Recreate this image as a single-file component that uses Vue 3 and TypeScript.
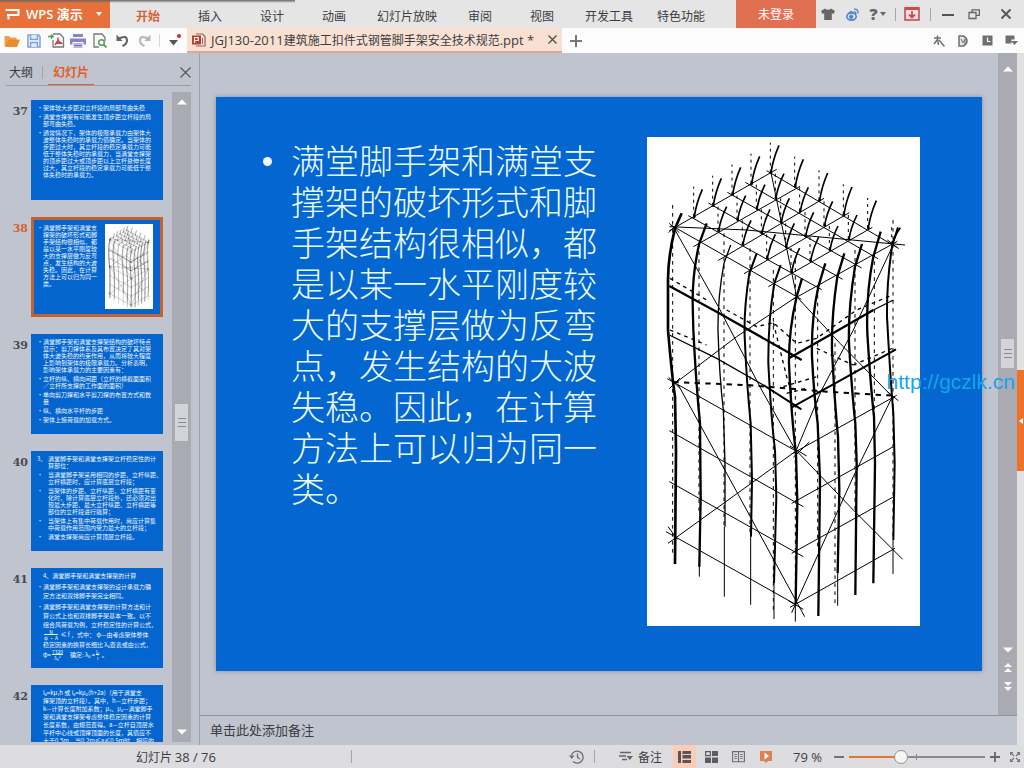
<script setup lang="ts">
import { ref } from 'vue'

interface Fraction { n: string; d: string }
type Piece = string | Fraction
interface Para { mark: string; lines: Piece[][] }
interface Slide { no: number; kind: string; paras: Para[]; picture?: boolean }

const para = (mark: string, ...lines: (string | Piece[])[]): Para => ({
  mark,
  lines: lines.map((l) => (typeof l === 'string' ? [l] : l)),
})

const menus: string[] = ['开始', '插入', '设计', '动画', '幻灯片放映', '审阅', '视图', '开发工具', '特色功能']
const activeMenu = ref('开始')
const activeSlide = ref(38)
const zoomLevel = ref(37)
const notes = ref('')

const bodyLines: string[] = [
  '满堂脚手架和满堂支',
  '撑架的破坏形式和脚',
  '手架结构很相似，都',
  '是以某一水平刚度较',
  '大的支撑层做为反弯',
  '点，发生结构的大波',
  '失稳。因此，在计算',
  '方法上可以归为同一',
  '类。',
]

const slides: Slide[] = [
  {
    no: 37, kind: 'plain', paras: [
      para('•', '架体较大步距对立杆段的局部弯曲失稳'),
      para('•', '满堂支撑架有可能发生顶步距立杆段的局', '部弯曲失稳。'),
      para('•', '通常情况下，架体的极限承载力由架体大', '波整体失稳时的承载力值确定。当架体的', '步距过大时，其立杆段的稳定承载力可能', '低于整体失稳时的承载力，当满堂支撑架', '的顶步距过大或顶步距以上立杆悬伸长度', '过大，其立杆段的稳定承载力可能低于整', '体失稳时的承载力。'),
    ],
  },
  { no: 38, kind: 'pictured', picture: true, paras: [para('•', ...bodyLines)] },
  {
    no: 39, kind: 'plain', paras: [
      para('•', '满堂脚手架和满堂支撑架结构的破坏特点', '显示：剪刀撑体系及其布置决定了其对架', '体大波失稳的约束作用，从而将较大程度', '上影响到架体的极限承载力。分析表明，', '影响架体承载力的主要因素有：'),
      para('•', '立杆的纵、横向间距（立杆的横截面面积', '／立杆所支撑的工作面的面积）'),
      para('•', '单向剪刀撑和水平剪刀撑的布置方式和数', '量'),
      para('•', '纵、横向水平杆的步距'),
      para('•', '架体上施荷载的加载方式。'),
    ],
  },
  {
    no: 40, kind: 'wide', paras: [
      para('3、', '满堂脚手架和满堂支撑架立杆稳定性的计', '算部位：'),
      para('•', '当满堂脚手架采用相同的步距、立杆纵距、', '立杆横距时，应计算底层立杆段；'),
      para('•', '当架体的步距、立杆纵距、立杆横距有变', '化时，除计算底层立杆段外，还必须对出', '现最大步距、最大立杆纵距、立杆横距等', '部位的立杆段进行验算；'),
      para('•', '当架体上有集中荷载作用时，尚应计算集', '中荷载作用范围内受力最大的立杆段；'),
      para('•', '满堂支撑架尚应计算顶层立杆段。'),
    ],
  },
  {
    no: 41, kind: 'loose', paras: [
      para('', '4、满堂脚手架和满堂支撑架的计算'),
      para('•', '满堂脚手架和满堂支撑架的设计承载力确', '定方法和双排脚手架完全相同。'),
      para('•', '满堂脚手架和满堂支撑架的计算方法和计', '算公式上也和双排脚手架基本一致。以不',
        '组合风荷载为例，立杆稳定性的计算公式，',
        [{ n: 'N', d: 'φ · A' }, ' ≤ f ，式中： φ—由考虑架体整体'],
        '稳定因素的换算长细比 λ₀查表或由公式，',
        ['φ=', { n: '7320', d: 'λ₀²' }, '　确定: λ₀ =', { n: 'l₀', d: 'i' }, ' 。']),
    ],
  },
  {
    no: 42, kind: 'dense', paras: [
      para('', 'l₀=kμ₁h 或 l₀=kμ₂(h+2a)（用于满堂支', '撑架顶的立杆段）。其中，h—立杆步距；', 'k—计算长度附加系数；μ₁、μ₂—满堂脚手', '架和满堂支撑架考虑整体稳定因素的计算', '长度系数，由规范查得。a—立杆自顶层水', '平杆中心线或顶撑顶面的长度，其值应不', '大于0.5m，当0.2m≤a≤0.5m时，相应的'),
    ],
  },
]

/* Roof grid of the scaffold: each node carries a dashed axis and a leaning stub. */
const stubs: { x: number; y: number; h: number }[] = []
for (let i = 0; i <= 5; i++) {
  for (let j = 0; j <= 5; j++) {
    if (i === 0 || j === 5) continue
    stubs.push({
      x: Math.round(105 + i * 57.6 + j * 73),
      y: Math.round(293 - i * 33 + j * 41.6),
      h: i === 5 || j === 0 ? 82 : 72,
    })
  }
}
stubs.push({ x: 757, y: 343, h: 50 })

const posts: { d: string; w: number }[] = [
  { d: 'M125 250 L105 295 Q84 380 84 450 L84 600 Q96 740 105 800 L108 960 L105 1302', w: 8 },
  { d: 'M200 280 L178 340 Q157 430 158 520 L160 600 Q168 760 180 880 L182 1100 L178 1310', w: 7 },
  { d: 'M272 345 L252 400 Q233 500 234 600 Q238 740 250 840 L255 1000 L255 1190', w: 4 },
  { d: 'M350 370 L328 430 Q311 540 314 620 Q320 760 332 880 L336 1050 L333 1220', w: 6 },
  { d: 'M422 405 L403 460 Q384 570 385 700 Q393 860 405 960 L409 1100 L402 1360', w: 6 },
  { d: 'M486 445 L470 500 Q446 600 447 700 Q454 860 468 970 L472 1120 L467 1420', w: 7 },
  { d: 'M556 400 L535 470 Q513 570 516 680 Q522 800 533 880 L540 1050 L535 1458', w: 7 },
  { d: 'M613 370 L592 440 Q574 560 576 660 Q584 820 594 920 L598 1080 L593 1330', w: 7 },
  { d: 'M666 342 L645 410 Q624 540 627 640 Q636 790 646 880 L650 1000 L646 1395', w: 7 },
  { d: 'M722 305 L700 380 Q678 490 682 610 Q692 770 702 860 L705 1000 L700 1360', w: 7 },
  { d: 'M774 292 L757 345 Q740 450 741 560 Q750 730 760 850 L764 1000 L760 1230', w: 6 },
]
const tails = 'M178 1300 V1340 M253 1190 V1400 M332 1220 V1424 M402 1360 V1467 M466 1420 V1475 M593 1330 V1427 M759 1230 V1332'
const axes: number[][] = [
  [98, 225, 1270], [177, 340, 1150], [252, 310, 1190], [330, 355, 1210], [400, 420, 1440], [466, 390, 1400],
  [533, 470, 1260], [585, 640, 1420], [645, 360, 1150], [703, 370, 880], [759, 270, 1230],
]
const roof = [
  'M88 302 L410 118', 'M380 122 L770 352', 'M92 285 L484 508', 'M455 510 L772 334',
  'M145 257 L545 479', 'M205 219 L608 448', 'M262 187 L665 414', 'M316 157 L714 386',
  'M160 350 L480 169', 'M235 391 L552 205', 'M312 431 L628 248', 'M385 470 L697 292',
  'M88 290 L320 300 L795 345', 'M393 128 L440 355 L470 500',
].join(' ')
const braces = [
  'M105 300 L235 530 L365 780 L468 963', 'M470 500 L290 620 L105 760', 'M115 765 L290 1085 L494 1460',
  'M468 963 L105 1225 L84 1240', 'M757 350 L640 600 L545 780 L468 963', 'M470 500 L600 640 L757 800',
  'M757 800 L640 1040 L455 1448', 'M470 963 L640 1140 L788 1288',
  'M82 746 L468 963', 'M88 902 L490 1130', 'M88 1055 L490 1280', 'M78 1205 L470 1425',
  'M455 972 L770 796', 'M455 1120 L760 950', 'M455 1270 L765 1098', 'M450 1432 L765 1255',
].join(' ')
</script>

<template>
  <div class="app">
    <svg class="defs" width="0" height="0" aria-hidden="true">
      <symbol id="scaffold" viewBox="21 21 819 1467" preserveAspectRatio="none">
        <rect x="21" y="21" width="819" height="1467" fill="#fff" />
        <g fill="none" stroke="#000">
          <path v-for="a in axes" :key="a[0]" :d="`M${a[0]} ${a[1]} V${a[2]}`" stroke-width="3" stroke-dasharray="11 13" />
          <g v-for="(s, i) in stubs" :key="i">
            <path :d="`M${s.x - 2} ${s.y} v${-s.h - 8}`" stroke-width="3" stroke-dasharray="9 12" />
            <path :d="`M${s.x} ${s.y} q6 ${-s.h / 2} 24 ${-s.h}`" stroke-width="5" />
            <circle :cx="s.x" :cy="s.y" r="4" fill="#000" stroke="none" />
          </g>
          <path :d="roof" stroke-width="3" />
          <path :d="braces" stroke-width="3" />
          <path v-for="(p, i) in posts" :key="i" :d="p.d" :stroke-width="p.w" />
          <path :d="tails" stroke-width="3" />
          <path d="M88 468 L235 548 L485 690 M448 684 L575 612 L700 540" stroke-width="7" />
          <path d="M700 540 L760 510 M88 615 L230 685 L370 765" stroke-width="4" />
          <path d="M370 765 L484 838 M455 832 L600 752 L768 658" stroke-width="6" />
          <path d="M100 756 L330 766 L560 785 L757 797" stroke-width="6" stroke-dasharray="16 16" />
          <path d="M90 445 L200 510 M260 540 L350 590 L400 578 L470 640 L530 625 L650 540 L757 495 M90 600 L200 645 M400 578 L440 740 L455 790 M530 655 L640 705 M640 705 L757 655 M430 770 L530 740 M440 790 L500 775" stroke-width="4" stroke-dasharray="11 12" />
          <path d="M88 280 L118 308 M86 308 L116 278 M86 742 L120 775 M88 776 L120 744 M450 948 L500 978 M460 982 L508 936 M84 1190 L112 1228 M742 330 L776 356 M445 1412 L490 1438 M742 785 L775 812" stroke-width="3" />
        </g>
      </symbol>
    </svg>

    <header class="titlebar">
      <div class="edge-shadow"></div>
      <button class="brand" type="button">
        <svg width="16" height="14" viewBox="0 0 16 14"><path d="M0.500 3H13.500V8H3.500V12.500M2 8H9" fill="none" stroke="#fff" stroke-width="2" /></svg>
        <span>WPS 演示</span>
        <svg class="brand-arrow" width="6" height="4" viewBox="0 0 6 4"><path d="M0 0h6L3 4z" fill="#fff" /></svg>
      </button>
      <nav class="menus">
        <button v-for="m in menus" :key="m" type="button" :class="{ on: m === activeMenu }" @click="activeMenu = m">{{ m }}</button>
      </nav>
      <button class="login" type="button">未登录</button>
      <div class="window-tools">
        <button type="button" aria-label="皮肤"><svg width="14" height="12" viewBox="0 0 14 12"><path d="M4 0.500 Q7 3 10 0.500 L14 3 L12.500 6 L10.800 5.200 V12 H3.200 V5.200 L1.500 6 L0 3z" fill="#666" /></svg></button>
        <button type="button" aria-label="微博"><svg width="13" height="13" viewBox="0 0 13 13" fill="none" stroke="#4d83cf"><ellipse cx="5.500" cy="8.500" rx="4.700" ry="3.600" stroke-width="1.600" /><circle cx="5.200" cy="8.800" r="1.700" fill="#4d83cf" /><path d="M3 5 Q5 3 6.500 4.500M7.500 4 Q10 3.500 9.800 6M8 1.200 Q12.500 0.800 12 5.500" stroke-width="1.400" /></svg></button>
        <button class="help" type="button" aria-label="帮助"><b>?</b><svg width="6" height="4" viewBox="0 0 6 4"><path d="M0 0h6L3 4z" fill="#666" /></svg></button>
        <i class="sep"></i>
        <button type="button" aria-label="下载"><svg width="16" height="14" viewBox="0 0 16 14" fill="none" stroke="#d8454f"><rect x="1" y="1" width="14" height="12" stroke-width="1.600" /><path d="M1 1.500h14" stroke-width="3" /><path d="M8 4v6M5 7.500l3 3 3-3" stroke-width="1.800" /></svg></button>
        <i class="sep far"></i>
        <button type="button" aria-label="最小化"><svg width="12" height="12" viewBox="0 0 12 12"><path d="M0 7h12" stroke="#555" stroke-width="2" /></svg></button>
        <button class="restore" type="button" aria-label="还原"><svg width="12" height="12" viewBox="0 0 12 12" fill="none" stroke="#666" stroke-width="1.300"><path d="M1 4.500h7v6H1zM4 4.500V1.800h7.300v5.500H8" /></svg></button>
        <button class="shut" type="button" aria-label="关闭"><svg width="12" height="12" viewBox="0 0 12 12"><path d="M1.500 1.500l9 9M10.500 1.500l-9 9" stroke="#555" stroke-width="1.800" /></svg></button>
      </div>
    </header>

    <div class="toolbar">
      <div class="quick">
        <button type="button" aria-label="打开"><svg width="16" height="14" viewBox="0 0 16 14"><path d="M0.500 12V2h4.500l1.500 1.500h6V6H5L2 12z" fill="#f0a04b" /><path d="M4.500 5.500H16L13 13H1z" fill="#ea8b2d" /></svg></button>
        <button type="button" aria-label="保存"><svg width="14" height="14" viewBox="0 0 14 14" fill="none" stroke="#7fa0d8" stroke-width="1.500"><path d="M1 1h10.500L13 2.500V13H1z" /><path d="M3.500 1v4.500h7V1M3.500 13V8.500h7V13" fill="#dfe8f7" /></svg></button>
        <button type="button" aria-label="输出为PDF"><svg width="17" height="15" viewBox="0 0 17 15" fill="none"><path d="M5 1h7l3.500 3.500V14H5V7" stroke="#777" stroke-width="1.300" /><path d="M0 3.500h5M3 1.500l2 2-2 2" stroke="#4fa24f" stroke-width="1.600" /><path d="M10 4.500v3L7 12M10 7.500q2 3 4.500 3M8 10.500l5-1" stroke="#cf3f3f" stroke-width="1.500" /></svg></button>
        <button type="button" aria-label="打印"><svg width="16" height="14" viewBox="0 0 16 14"><path d="M3 0h10v3H3z" fill="#8884c4" /><path d="M0 4.500h16v6h-2.500V8h-11v2.500H0z" fill="#8884c4" /><path d="M3.500 9h9v5h-9z" fill="#b9b6e2" /><path d="M4 11.500h8" stroke="#7b76bb" /></svg></button>
        <button type="button" aria-label="打印预览"><svg width="14" height="15" viewBox="0 0 14 15" fill="none"><path d="M12 8V4.500L9 1H1v13h5" stroke="#777" stroke-width="1.300" /><circle cx="8.500" cy="9.500" r="2.800" stroke="#4fa24f" stroke-width="1.500" /><path d="M10.500 11.500l3 3" stroke="#4fa24f" stroke-width="1.800" /></svg></button>
        <button type="button" aria-label="撤销"><svg width="13" height="13" viewBox="0 0 13 13"><path d="M2.500 4.500Q11 0.500 11 6.500Q11 10 6.500 12" fill="none" stroke="#5f6266" stroke-width="2" /><path d="M0.500 0.500v6.500h6z" fill="#5f6266" /></svg></button>
        <button type="button" aria-label="恢复"><svg width="13" height="13" viewBox="0 0 13 13"><path d="M10.500 4.500Q2 0.500 2 6.500Q2 10 6.500 12" fill="none" stroke="#b3b6b9" stroke-width="2" /><path d="M12.500 0.500v6.500h-6z" fill="#b3b6b9" /></svg></button>
      </div>
      <i class="sep"></i>
      <button class="more" type="button" aria-label="自定义快速访问"><svg width="14" height="14" viewBox="0 0 14 14"><path d="M1 6h9l-4.500 5.500z" fill="#555" /><circle cx="11" cy="2" r="2" fill="#cf2b2b" /></svg></button>
      <div class="doc-tab">
        <svg width="14" height="14" viewBox="0 0 14 14" fill="none"><path d="M4 1h6.500L13 3.500V13H4" stroke="#7d6a64" stroke-width="1.200" /><rect x="0" y="2.500" width="9" height="9" fill="#bf3a2b" /><path d="M2.500 10V4.500h3.700v3H2.500" stroke="#fff" stroke-width="1.200" /><path d="M10.500 5v6" stroke="#c8574b" /></svg>
        <span class="doc-name"><span class="latin">JGJ130-2011</span>建筑施工扣件式钢管脚手架安全技术规范<span class="latin">.ppt *</span></span>
        <button type="button" aria-label="关闭文档"><svg width="9" height="9" viewBox="0 0 9 9"><path d="M0.500 0.500l8 8M8.500 0.500l-8 8" stroke="#444" stroke-width="1.100" /></svg></button>
      </div>
      <button class="add" type="button" aria-label="新建"><svg width="12" height="12" viewBox="0 0 12 12"><path d="M0 6h12M6 0v12" stroke="#777" stroke-width="2" /></svg></button>
      <div class="side-tools">
        <button type="button" aria-label="工具"><svg width="12" height="12" viewBox="0 0 12 12" fill="none" stroke="#6f6f73" stroke-width="1.500"><path d="M1 3h7M4.500 0.500v4L1 9M4.500 4l1 6M6 5l5.500 6.500" /></svg></button>
        <button type="button" aria-label="文档"><svg width="10" height="12" viewBox="0 0 10 12"><path d="M1 1h4.500Q9 3 9 6t-3.500 5H1z" fill="#e6e6ea" stroke="#6f6f73" stroke-width="1.500" /><path d="M3 4l2 4 2-4v5" fill="none" stroke="#6f6f73" /></svg></button>
        <button type="button" aria-label="历史"><svg width="11" height="11" viewBox="0 0 11 11"><rect x="0.500" y="0.500" width="10" height="10" fill="#6f6f73" /><path d="M5.500 2.500v4H8.500" fill="none" stroke="#fff" stroke-width="1.200" /></svg></button>
        <button type="button" aria-label="菜单"><svg width="13" height="11" viewBox="0 0 13 11"><path d="M0.500 0.500h9v4h-3v4h-6z" fill="#6f6f73" /><path d="M6 6h7l-3.500 4z" fill="#6f6f73" /></svg></button>
      </div>
    </div>

    <main class="work">
      <aside class="outline">
        <div class="outline-tabs">
          <button type="button">大纲</button>
          <i class="sep"></i>
          <button class="on" type="button">幻灯片</button>
          <button class="close" type="button" aria-label="关闭窗格"><svg width="11" height="11" viewBox="0 0 11 11"><path d="M0.500 0.500l10 10M10.500 0.500l-10 10" stroke="#555" stroke-width="1.100" /></svg></button>
        </div>
        <div class="outline-body">
          <ol class="slides">
            <li v-for="s in slides" :key="s.no" :class="{ current: s.no === activeSlide }" @click="activeSlide = s.no">
              <span class="no">{{ s.no }}</span>
              <div class="mini" :class="s.kind">
                <div class="mini-text">
                  <div v-for="(p, i) in s.paras" :key="i" class="mini-para">
                    <span class="mark">{{ p.mark }}</span>
                    <div>
                      <div v-for="(l, k) in p.lines" :key="k" class="mini-line">
                        <template v-for="(x, q) in l" :key="q">
                          <span v-if="typeof x === 'string'">{{ x }}</span>
                          <span v-else class="frac"><span>{{ x.n }}</span><span>{{ x.d }}</span></span>
                        </template>
                      </div>
                    </div>
                  </div>
                </div>
                <svg v-if="s.picture" class="mini-pic"><use href="#scaffold" width="100%" height="100%" /></svg>
              </div>
            </li>
          </ol>
          <div class="track">
            <svg width="10" height="6" viewBox="0 0 10 6"><path d="M0 5.500h10L5 0.500z" fill="#fff" /></svg>
            <div class="grip"><i></i><i></i><i></i></div>
            <svg width="10" height="6" viewBox="0 0 10 6"><path d="M0 0.500h10L5 5.500z" fill="#fff" /></svg>
          </div>
        </div>
      </aside>

      <section class="center">
        <div class="stage-row">
          <div class="stage">
            <article class="slide">
              <div class="slide-text">
                <span class="dot"></span>
                <p><template v-for="(l, i) in bodyLines" :key="i"><br v-if="i > 0" />{{ l }}</template></p>
              </div>
              <svg class="slide-pic" role="img" aria-label="满堂支撑架大波失稳"><use href="#scaffold" width="100%" height="100%" /></svg>
            </article>
          </div>
          <div class="track main-track">
            <svg width="10" height="6" viewBox="0 0 10 6"><path d="M0 5.500h10L5 0.500z" fill="#fff" /></svg>
            <div class="grip"><i></i><i></i><i></i></div>
            <div class="pager">
              <svg width="10" height="6" viewBox="0 0 10 6"><path d="M0 0.500h10L5 5.500z" fill="#fff" /></svg>
              <svg width="8" height="9" viewBox="0 0 8 9"><path d="M0 4h8L4 0zM0 9h8L4 5z" fill="#fff" /></svg>
              <svg width="8" height="9" viewBox="0 0 8 9"><path d="M0 0h8L4 4zM0 5h8L4 9z" fill="#fff" /></svg>
            </div>
          </div>
        </div>
        <textarea v-model="notes" class="notes" rows="1" aria-label="备注" placeholder="单击此处添加备注"></textarea>
      </section>

      <div class="rail">
        <button type="button" aria-label="展开任务窗格"><svg width="4" height="6" viewBox="0 0 4 6"><path d="M4 0v6L0 3z" fill="#fff" /></svg></button>
      </div>
      <span class="watermark">http://gczlk.cn</span>
    </main>

    <footer class="status">
      <span class="page-no">幻灯片 <span class="latin">38 / 76</span></span>
      <i class="sep"></i>
      <div class="status-right">
        <button class="history" type="button" aria-label="备份"><svg width="15" height="14" viewBox="0 0 15 14" fill="none" stroke="#6d6d70" stroke-width="1.300"><path d="M2.500 5A6 6 0 1 1 4 11.500" /><path d="M8.500 3.500V7.500l2.500 1.500" /><path d="M0 5.500h5.500L2.800 9z" fill="#6d6d70" stroke="none" /></svg></button>
        <i class="sep"></i>
        <button class="note-btn" type="button"><svg width="14" height="11" viewBox="0 0 14 11"><path d="M1 1.500h11M0 5h7M3 8.500h5" stroke="#666" stroke-width="1.300" /><path d="M7.500 5h6.500l-3.200 4z" fill="#666" /></svg>备注</button>
        <button class="view on" type="button" aria-label="普通视图"><svg width="13" height="12" viewBox="0 0 13 12" fill="#5c5450"><path d="M0 0h3v12H0zM4.500 0H13v7.500H4.500zM4.500 9H13v3H4.500z" /><path d="M4.500 3.500H13" stroke="#f9cdb8" /></svg></button>
        <button class="view" type="button" aria-label="幻灯片浏览"><svg width="13" height="12" viewBox="0 0 13 12" fill="#5d5d60"><path d="M7 0h6v5H7zM0 6.500h6V12H0zM7 6.500h6V12H7z" /><path d="M0.600 0.600h4.800v4H0.600z" fill="none" stroke="#5d5d60" stroke-width="1.200" /></svg></button>
        <button class="view" type="button" aria-label="阅读视图"><svg width="13" height="12" viewBox="0 0 13 12" fill="none" stroke="#6d6d70" stroke-width="1.100"><path d="M0.600 0.600h5.900v10.200H0.600zM6.500 0.600h5.900v10.200H6.500zM2.500 3.500h2.300M2.500 5.500h2.300M2.500 7.500h2.300M8.300 3.500h2.300M8.300 5.500h2.300M8.300 7.500h2.300" /></svg></button>
        <button class="view" type="button" aria-label="放映"><svg width="12" height="12" viewBox="0 0 12 12"><path d="M0 0h12v10H8l-2 2-2-2H0z" fill="#dd8155" /><path d="M4.500 1.500L9 5 4.500 8.500z" fill="#fff" /></svg></button>
        <span class="percent">79 %</span>
        <button class="step" type="button" aria-label="缩小"><svg width="10" height="10" viewBox="0 0 10 10"><path d="M0 5h10" stroke="#666" stroke-width="1.800" /></svg></button>
        <input v-model="zoomLevel" class="zoom" type="range" min="0" max="100" aria-label="显示比例" />
        <button class="step" type="button" aria-label="放大"><svg width="10" height="10" viewBox="0 0 10 10"><path d="M0 5h10M5 0v10" stroke="#666" stroke-width="1.800" /></svg></button>
        <button class="fit" type="button" aria-label="适应窗口"><svg width="10" height="10" viewBox="0 0 10 10" fill="none" stroke="#77777a" stroke-width="1.200"><path d="M0.500 3V0.500H3M7 0.500h2.500V3M9.500 7v2.500H7M3 9.500H0.500V7M1 1l3 3M9 1L6 4M1 9l3-3M9 9L6 6" /></svg></button>
      </div>
    </footer>
  </div>
</template>

<style>
body { margin: 0; }
</style>

<style scoped>
.app {
  display: flex;
  flex-direction: column;
  height: 100vh;
  overflow: hidden;
  background: #c0c4ce;
  color: #3c3c40;
  font: 12px/16px "Noto Sans CJK SC", "Noto Sans", sans-serif;
}
.defs { display: block; width: 0; height: 0; position: absolute; }
button {
  display: flex;
  align-items: center;
  justify-content: center;
  margin: 0;
  padding: 0;
  border: 0;
  background: none;
  color: inherit;
  font: inherit;
  flex: none;
}
svg { flex: none; }
.sep { flex: none; width: 1px; height: 13px; background: #a5a5a9; }
.latin { font-family: "Open Sans", sans-serif; font-size: 13px; }

.titlebar { position: relative; display: flex; flex: none; height: 28px; background: #e5e5e6; }
.edge-shadow { position: absolute; left: 0; top: 0; width: 295px; height: 3px; background: linear-gradient(#6b6461, rgba(120, 110, 105, 0)); }
.brand { width: 110px; justify-content: flex-start; padding-left: 5px; background: #e6713a; color: #fff; gap: 5px; font-weight: 600; font-family: "Open Sans", "Noto Sans CJK SC", sans-serif; font-size: 13px; }
.brand-arrow { margin-left: 8px; }
.menus { display: flex; flex: 1; margin-left: 7px; padding-top: 4px; }
.menus button { min-width: 62px; padding: 0 12px; }
.menus .on { color: #dc6231; font-weight: 700; }
.login { width: 80px; background: #df7052; color: #fff; }
.window-tools { display: flex; align-items: center; }
.window-tools button { width: 24px; height: 28px; }
.window-tools .help { width: 27px; gap: 2px; color: #666; font: 700 16px/20px "Open Sans", sans-serif; }
.window-tools .sep { margin: 0 4px; }
.window-tools .far { margin: 0 5px 0 6px; }
.window-tools .restore { width: 28px; }
.window-tools .shut { width: 36px; }

.toolbar { display: flex; flex: none; align-items: center; height: 25px; background: #fcfcfc; }
.quick { display: flex; padding-left: 1px; }
.quick button { width: 22px; height: 25px; }
.toolbar > .sep { margin: 0 2px 0 4px; background: #d8d8d8; }
.more { width: 25px; height: 25px; }
.doc-tab { display: flex; align-items: center; box-sizing: border-box; height: 25px; width: 375px; padding: 0 5px; gap: 5px; background: #f8e1d2; border-bottom: 2px solid #d9a9a0; }
.doc-name { flex: 1; white-space: nowrap; }
.doc-tab button { width: 10px; height: 20px; }
.add { width: 28px; height: 25px; }
.side-tools { display: flex; margin-left: auto; padding-right: 1px; }
.side-tools button { width: 24px; height: 25px; }

.work { position: relative; display: flex; flex: 1; min-height: 0; }
.outline { display: flex; flex-direction: column; box-sizing: border-box; width: 200px; flex: none; border-right: 1px solid #9da1aa; }
.outline-tabs { display: flex; align-items: center; flex: none; box-sizing: border-box; height: 33px; margin: 0 8px 0 6px; padding-top: 6px; border-bottom: 1px solid #9a9da6; }
.outline-tabs button { height: 26px; padding: 0 3px; }
.outline-tabs .sep { margin: 0 5px 0 6px; }
.outline-tabs .on { color: #e0602c; font-weight: 700; padding: 0 5px; border-bottom: 1px solid #e0602c; }
.outline-tabs .close { margin-left: auto; padding: 0; }
.outline-body { display: flex; flex: 1; min-height: 0; margin: 6px 8px 3px 0; }
.slides { display: flex; flex-direction: column; gap: 17px; flex: 1; margin: 0; padding: 8px 0 0; list-style: none; overflow: hidden; }
.slides li { display: grid; grid-template-columns: 28px 132px; gap: 3px; height: 100px; flex: none; }
.no { padding-top: 4px; text-align: right; font: 700 11px/16px "DejaVu Serif", serif; color: #4a4a4e; }
.current .no { color: #cf6430; }
.mini { position: relative; display: flex; box-sizing: border-box; height: 100px; padding: 4px 0 0 6px; overflow: hidden; background: #0465ce; color: #f2f8ff; font-size: 6px; line-height: 7px; }
.current .mini { box-shadow: inset 0 0 0 3px #c4622f; }
.pictured { padding-top: 7px; }
.mini-text { display: flex; flex-direction: column; gap: 2px; }
.mini-para { display: grid; grid-template-columns: 6px auto; white-space: nowrap; }
.wide .mini-para { grid-template-columns: 11px auto; }
.loose { line-height: 9px; padding-top: 3px; }
.dense { line-height: 8px; }
.mini-line { display: flex; align-items: center; white-space: pre; }
.frac { display: inline-grid; padding: 0 1px; text-align: center; line-height: 5px; font-size: 5px; }
.frac span + span { border-top: 1px solid #e6f1ff; }
.mini-pic { width: 48px; height: 85px; margin-left: 8px; }

.track { display: flex; flex-direction: column; align-items: center; justify-content: space-between; box-sizing: border-box; width: 19px; flex: none; padding: 7px 0; background: #aaaab3; }
.grip { display: flex; flex-direction: column; align-items: center; justify-content: center; gap: 3px; width: 13px; height: 37px; margin-top: 10px; background: #d3d3da; }
.grip i { width: 8px; height: 1px; background: #8a8a92; }

.center { display: flex; flex-direction: column; flex: 1; min-width: 0; }
.stage-row { display: flex; flex: 1; min-height: 0; }
.stage { display: flex; flex: 1; padding: 44px 16px; }
.slide { display: flex; flex: 1; justify-content: space-between; align-items: flex-start; box-sizing: border-box; padding: 40px 62px 0 47px; background: #0466d0; box-shadow: 0 0 4px rgba(70, 80, 100, 0.5); }
.slide-text { display: flex; gap: 19px; padding-top: 2px; color: #eafbff; }
.dot { flex: none; width: 9px; height: 9px; margin-top: 18px; border-radius: 50%; background: #f2fbff; }
.slide-text p { margin: 0; font-size: 34px; line-height: 41px; font-weight: 300; white-space: nowrap; }
.slide-pic { width: 273px; height: 489px; }
.main-track { padding: 13px 0 24px; }
.main-track .grip { height: 29px; margin: 0 0 12px; }
.pager { display: flex; flex-direction: column; align-items: center; gap: 10px; }
.notes { display: block; box-sizing: border-box; height: 30px; margin: 0; padding: 5px 10px; border: 0; border-top: 1px solid #8f939c; background: #c0c4ce; color: #3c3c40; font: 13px/18px "Noto Sans CJK SC", sans-serif; resize: none; outline: none; }
.notes::placeholder { color: #3c3c40; opacity: 1; }
.rail { display: flex; align-items: center; box-sizing: border-box; width: 7px; flex: none; background: #e1e1e3; padding-top: 43px; }
.rail button { width: 7px; height: 101px; background: #ee7129; }
.watermark { position: absolute; right: 9px; top: 317px; color: #12a5ee; font: 21px/24px "Liberation Sans", sans-serif; }

.status { display: flex; flex: none; align-items: center; height: 23px; background: #dddde0; }
.page-no { margin-left: 136px; width: 215px; }
.status-right { display: flex; align-items: center; margin-left: auto; }
.history { width: 22px; margin-right: 6px; }
.note-btn { gap: 5px; margin: 0 9px 0 24px; }
.view { width: 27px; height: 23px; }
.view.on { background: #f9cdb8; width: 23px; margin: 0 2px; }
.percent { width: 34px; margin: 0 4px 0 14px; font: 13px/16px "Open Sans", sans-serif; white-space: nowrap; }
.step { width: 16px; height: 20px; }
.zoom { appearance: none; width: 136px; height: 16px; margin: 0 2px; background: linear-gradient(#8a8a90, #8a8a90) 67px center / 1px 6px no-repeat, linear-gradient(90deg, #e07434 38%, #8a8a90 38%) center / 100% 2px no-repeat; }
.zoom::-webkit-slider-thumb { appearance: none; width: 14px; height: 14px; border: 1px solid #909095; border-radius: 50%; background: #f5f5f6; }
.fit { width: 18px; height: 20px; margin-left: 3px; }
</style>
